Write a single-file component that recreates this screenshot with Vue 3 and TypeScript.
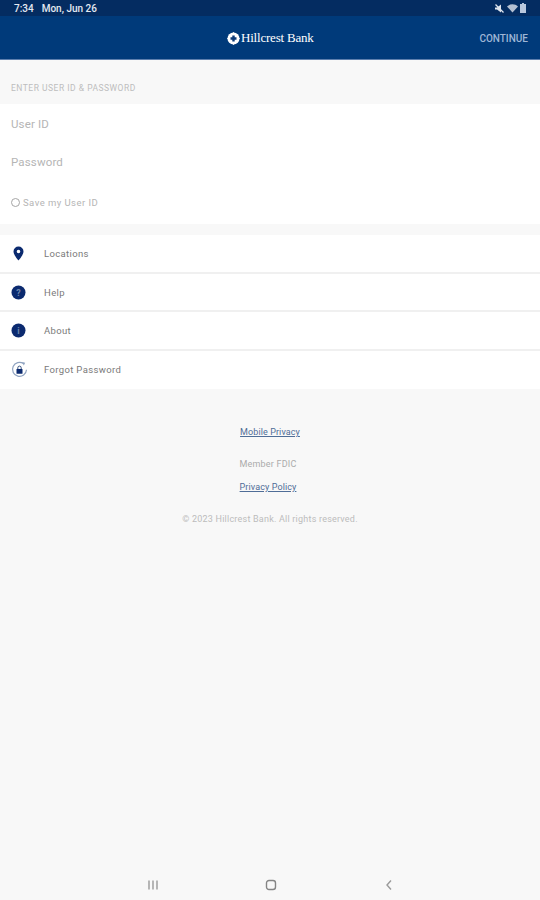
<template>
  <div class="screen">
    <div class="status-bar">
      <span class="status-time">7:34</span>
      <span class="status-date">Mon, Jun 26</span>
      <span class="status-icons">
        <svg width="11" height="11" viewBox="0 0 11 11">
          <path d="M1 4.500h2L7 1.500v8L3 6.500H1z" fill="#dfe5ee" />
          <path d="M1.500 1.500l8 8" stroke="#dfe5ee" stroke-width="1.200" />
        </svg>
        <svg width="11" height="10" viewBox="0 0 11 10">
          <path d="M0 3.500C3 .6 8 .6 11 3.500L5.500 9.500z" fill="#b4c0d2" />
        </svg>
        <svg width="6" height="10" viewBox="0 0 6 10">
          <path d="M2 0h2v1h2v9H0V1h2z" fill="#b9c8de" />
        </svg>
      </span>
    </div>

    <header class="app-bar">
      <div class="logo">
        <svg class="logo__mark" width="13" height="13" viewBox="0 0 13 13">
          <circle cx="6.500" cy="6.500" r="6" fill="#fff" />
          <path d="M6.500 0l2 2.500h-4zM6.500 13l2-2.500h-4zM0 6.500l2.500-2v4zM13 6.500l-2.500-2v4z" fill="#fff" />
          <path d="M5.300 3.500h2.400v1.800h1.800v2.400H7.700v1.800H5.300V7.700H3.500V5.300h1.800z" fill="#0b3a78" />
        </svg>
        <span class="logo__name">Hillcrest Bank</span>
      </div>
      <span class="continue">CONTINUE</span>
    </header>

    <div class="section-label">ENTER USER ID &amp; PASSWORD</div>

    <section class="login">
      <div class="field">User ID</div>
      <div class="field">Password</div>
      <div class="save">
        <span class="save__radio"></span>
        <span>Save my User ID</span>
      </div>
    </section>

    <nav class="menu">
      <div v-for="item in menuItems" :key="item.label" class="menu__row">
        <span class="menu__icon">
          <svg v-if="item.icon === 'pin'" width="15" height="15" viewBox="0 0 15 15">
            <path
              fill-rule="evenodd"
              d="M7.500 .5a5 5 0 0 1 5 5c0 3.500-5 9-5 9s-5-5.500-5-9a5 5 0 0 1 5-5zm0 3.200a1.800 1.800 0 1 0 0 3.600 1.800 1.800 0 0 0 0-3.600z"
              fill="#0b2a6f"
            />
          </svg>
          <svg v-else-if="item.icon === 'help'" width="15" height="15" viewBox="0 0 15 15">
            <circle cx="7.500" cy="7.500" r="7" fill="#0b2a6f" />
            <text x="7.500" y="10.500" class="menu__glyph">?</text>
          </svg>
          <svg v-else-if="item.icon === 'about'" width="15" height="15" viewBox="0 0 15 15">
            <circle cx="7.500" cy="7.500" r="7" fill="#0b2a6f" />
            <text x="7.500" y="10.500" class="menu__glyph">i</text>
          </svg>
          <svg v-else width="17" height="17" viewBox="0 0 17 17">
            <path d="M12.500 2.600A7 7 0 1 0 15.500 8.800" fill="none" stroke="#8fa3c0" stroke-width="1.200" />
            <path d="M11 1l3.200.8-1.400 2.600z" fill="#8fa3c0" />
            <rect x="5.500" y="8" width="6" height="4.800" rx="0.600" fill="#0b2a6f" />
            <path d="M6.800 8V6.800a1.700 1.700 0 0 1 3.400 0V8" fill="none" stroke="#33507f" stroke-width="1" />
          </svg>
        </span>
        <span class="menu__label">{{ item.label }}</span>
      </div>
    </nav>

    <footer class="footer">
      <a class="footer__link footer__link--first">Mobile Privacy</a>
      <span class="footer__member">Member FDIC</span>
      <a class="footer__link footer__link--policy">Privacy Policy</a>
      <span class="footer__copy">© 2023 Hillcrest Bank. All rights reserved.</span>
    </footer>

    <div class="nav-bar">
      <svg width="12" height="12" viewBox="0 0 12 12">
        <path d="M2 1.500v9M6 1.500v9M10 1.500v9" stroke="#9a9a9a" stroke-width="1.400" />
      </svg>
      <svg width="12" height="12" viewBox="0 0 12 12">
        <rect x="1.500" y="1.500" width="9" height="9" rx="2.500" fill="none" stroke="#858585" stroke-width="1.400" />
      </svg>
      <svg width="12" height="12" viewBox="0 0 12 12">
        <path d="M8 1.500L4 6l4 4.500" fill="none" stroke="#9a9a9a" stroke-width="1.400" />
      </svg>
    </div>
  </div>
</template>

<script setup lang="ts">
interface MenuItem {
  label: string;
  icon: 'pin' | 'help' | 'about' | 'lock';
}

const menuItems: MenuItem[] = [
  { label: 'Locations', icon: 'pin' },
  { label: 'Help', icon: 'help' },
  { label: 'About', icon: 'about' },
  { label: 'Forgot Password', icon: 'lock' },
];
</script>

<style>
html,
body {
  margin: 0;
  background: #f8f8f8;
}
</style>

<style scoped>
.screen {
  width: 540px;
  height: 900px;
  display: flex;
  flex-direction: column;
  background: #f8f8f8;
  font-family: Roboto, "Liberation Sans", sans-serif;
  overflow: hidden;
}

.status-bar {
  height: 16px;
  display: flex;
  align-items: center;
  padding: 0 14px;
  background: #042c61;
  color: #e4e9f1;
  font-size: 10px;
  font-weight: 500;
}

.status-date {
  margin-left: 8px;
}

.status-icons {
  margin-left: auto;
  display: flex;
  align-items: center;
  gap: 2px;
}

.app-bar {
  height: 43px;
  position: relative;
  display: flex;
  align-items: center;
  justify-content: flex-end;
  padding: 0 12px;
  background: #003a7a;
  border-bottom: 1px solid #5d7fae;
}

.logo {
  position: absolute;
  left: 227px;
  top: 14px;
  display: flex;
  align-items: center;
  gap: 1px;
}

.logo__name {
  color: #fff;
  font-family: "Liberation Serif", serif;
  font-size: 13px;
  letter-spacing: -0.200px;
}

.continue {
  margin-top: 2px;
  color: #9fb6d6;
  font-size: 10px;
  font-weight: 500;
}

.section-label {
  height: 44px;
  padding: 23px 0 0 11px;
  box-sizing: border-box;
  color: #bdbdbd;
  font-size: 8.500px;
  letter-spacing: 0.500px;
}

.login {
  height: 120px;
  box-sizing: border-box;
  padding-top: 0.500px;
  display: flex;
  flex-direction: column;
  background: #fff;
}

.field {
  height: 38.500px;
  display: flex;
  align-items: center;
  padding-left: 11px;
  color: #b5b5b5;
  font-size: 11.500px;
  letter-spacing: 0.150px;
}

.save {
  height: 41px;
  display: flex;
  align-items: center;
  gap: 3px;
  padding-left: 11px;
  color: #b5b5b5;
  font-size: 9.500px;
  letter-spacing: 0.450px;
}

.save__radio {
  width: 7px;
  height: 7px;
  border: 1px solid #a5a5a5;
  border-radius: 50%;
}

.menu {
  margin-top: 11px;
  display: flex;
  flex-direction: column;
}

.menu__row {
  height: 38.500px;
  box-sizing: border-box;
  padding-top: 1px;
  display: flex;
  align-items: center;
  background: #fff;
  border-bottom: 2px solid #f0f0f0;
}

.menu__row:last-child {
  padding-top: 0;
  border-bottom: none;
}

.menu__icon {
  width: 44px;
  padding-left: 11px;
  box-sizing: border-box;
  display: flex;
  align-items: center;
}

.menu__glyph {
  fill: #6f86ad;
  font-size: 9px;
  font-weight: 700;
  text-anchor: middle;
}

.menu__label {
  color: #7a7a7a;
  font-size: 9.500px;
  letter-spacing: 0.350px;
}

.footer {
  display: flex;
  flex-direction: column;
  align-items: center;
  font-size: 9px;
}

.footer__link {
  color: #4f6d97;
  text-decoration: underline;
  letter-spacing: 0.100px;
}

.footer__link--first {
  margin-top: 38px;
}

.footer__link--policy {
  margin-right: 4px;
}

.footer__member {
  margin-top: 22px;
  margin-bottom: 13px;
  margin-right: 4px;
  color: #ababab;
  letter-spacing: 0.200px;
}

.footer__copy {
  margin-top: 22px;
  color: #bcbcbc;
  letter-spacing: 0.220px;
}

.nav-bar {
  margin-top: auto;
  height: 30px;
  display: flex;
  align-items: center;
  justify-content: space-between;
  padding: 0 145px 0 147px;
}
</style>
